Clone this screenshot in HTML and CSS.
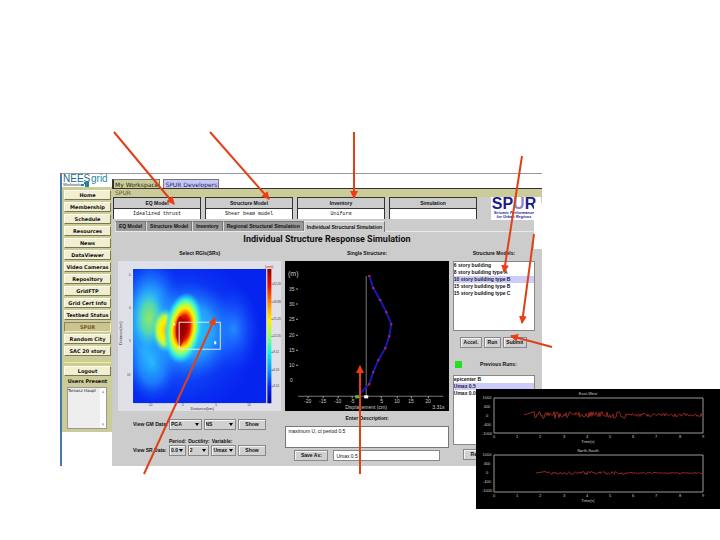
FILE: index.html
```
<!DOCTYPE html>
<html lang="en">
<head>
    <meta charset="utf-8">
    <title>SPUR - Individual Structure Response Simulation</title>
    <link rel="stylesheet" href="styles.css">
</head>
<body>
    <div class="portal">
        <aside class="sidebar">
            <div class="brand">
                <svg viewBox="0 0 50 13" aria-hidden="true">
                    <path d="M22 8h5v2h-5zM23 10h4v3h-4zM19 10h3v2h-3z" fill="#2a7f9a"/>
                    <text x="1" y="8" class="brand-neer">NEES</text>
                    <text x="29" y="8" class="brand-grid">grid</text>
                    <text x="1" y="12" class="brand-tag">Worktools</text>
                </svg>
            </div>
            <nav class="menu">
                <button>Home</button>
                <button>Membership</button>
                <button>Schedule</button>
                <button>Resources</button>
                <button>News</button>
                <button>DataViewer</button>
                <button>Video Cameras</button>
                <button>Repository</button>
                <button>GridFTP</button>
                <button>Grid Cert Info</button>
                <button>Testbed Status</button>
                <button class="current">SPUR</button>
                <button>Random City</button>
                <button>SAC 20 story</button>
                <hr>
                <button>Logout</button>
                <label for="users">Users Present</label>
                <div class="users-box">
                    <select id="users" size="4">
                        <option>Tomasz Haupt</option>
                    </select>
                    <div class="scroll"><span>▴</span><span>▾</span></div>
                </div>
            </nav>
        </aside>

        <main class="workspace">
            <div class="site-tabs">
                <button class="site-tab active">My Workspace</button>
                <button class="site-tab">SPUR Developers</button>
            </div>
            <div class="crumb">SPUR</div>

            <div class="applet">
                <header class="summary">
                    <div class="card"><b>EQ Model</b><span>Idealized thrust</span></div>
                    <div class="card"><b>Structure Model</b><span>Shear beam model</span></div>
                    <div class="card"><b>Inventory</b><span>Uniform</span></div>
                    <div class="card"><b>Simulation</b><span></span></div>
                    <div class="logo">
                        <strong>SP<i>U</i>R</strong>
                        <em>Seismic Performance</em>
                        <em>for Urban Regions</em>
                    </div>
                </header>

                <div class="tabs" role="tablist">
                    <button role="tab">EQ Model</button>
                    <button role="tab">Structure Model</button>
                    <button role="tab">Inventory</button>
                    <button role="tab">Regional Structural Simulation</button>
                    <button role="tab" aria-selected="true">Individual Structural Simulation</button>
                </div>

                <h1>Individual Structure Response Simulation</h1>

                <div class="columns">
                    <section class="column">
                        <h2>Select RGIs(SRs)</h2>
                        <svg class="plot" viewBox="0 0 163 150">
                            <defs>
                                <linearGradient id="jet" x1="0" y1="0" x2="0" y2="1">
                                    <stop offset="0" stop-color="#900000"/>
                                    <stop offset=".13" stop-color="#f01000"/>
                                    <stop offset=".26" stop-color="#ff9000"/>
                                    <stop offset=".38" stop-color="#fff000"/>
                                    <stop offset=".5" stop-color="#90ff70"/>
                                    <stop offset=".62" stop-color="#10f0f0"/>
                                    <stop offset=".76" stop-color="#0890ff"/>
                                    <stop offset=".88" stop-color="#0020ff"/>
                                    <stop offset="1" stop-color="#0000a0"/>
                                </linearGradient>
                                <radialGradient id="peak">
                                    <stop offset="0" stop-color="#900000"/>
                                    <stop offset=".2" stop-color="#a80000"/>
                                    <stop offset=".36" stop-color="#f01800"/>
                                    <stop offset=".46" stop-color="#ff9000"/>
                                    <stop offset=".56" stop-color="#fff000"/>
                                    <stop offset=".68" stop-color="#a0ff60"/>
                                    <stop offset=".8" stop-color="#30f0e0"/>
                                    <stop offset="1" stop-color="#20c8ff" stop-opacity="0"/>
                                </radialGradient>
                                <radialGradient id="lobe">
                                    <stop offset="0" stop-color="#ffc800"/>
                                    <stop offset=".4" stop-color="#fff000"/>
                                    <stop offset=".65" stop-color="#b0f850"/>
                                    <stop offset="1" stop-color="#30e0e0" stop-opacity="0"/>
                                </radialGradient>
                                <radialGradient id="green">
                                    <stop offset="0" stop-color="#90e860"/>
                                    <stop offset=".5" stop-color="#60e0a0" stop-opacity=".8"/>
                                    <stop offset="1" stop-color="#30c8ff" stop-opacity="0"/>
                                </radialGradient>
                                <radialGradient id="cyan">
                                    <stop offset="0" stop-color="#28d8ff"/>
                                    <stop offset=".5" stop-color="#28a8ff" stop-opacity=".85"/>
                                    <stop offset="1" stop-color="#1060ff" stop-opacity="0"/>
                                </radialGradient>
                                <radialGradient id="haze">
                                    <stop offset="0" stop-color="#2890ff"/>
                                    <stop offset="1" stop-color="#1040ff" stop-opacity="0"/>
                                </radialGradient>
                                <clipPath id="field"><path d="M15 8h133v134H15z"/></clipPath>
                            </defs>
                            <g clip-path="url(#field)">
                                <path d="M15 8h133v134H15z" fill="#0524ee"/>
                                <ellipse cx="60" cy="74" rx="84" ry="84" fill="url(#haze)"/>
                                <ellipse cx="115" cy="68" rx="26" ry="44" fill="url(#haze)"/>
                                <ellipse cx="32" cy="62" rx="34" ry="70" fill="url(#cyan)"/>
                                <ellipse cx="34" cy="102" rx="26" ry="40" fill="url(#cyan)" opacity=".6"/>
                                <ellipse cx="72" cy="70" rx="48" ry="50" fill="url(#cyan)"/>
                                <ellipse cx="31" cy="57" rx="16" ry="30" fill="url(#green)"/>
                                <ellipse cx="47" cy="69" rx="13" ry="22" fill="url(#lobe)"/>
                                <ellipse cx="65" cy="67" rx="19" ry="36" fill="url(#peak)" transform="rotate(8 65 67)"/>
                                <ellipse cx="62" cy="70" rx="4" ry="15" fill="#940000" opacity=".6"/>
                            </g>
                            <path d="M61 61h41v27H61z" class="region"/>
                            <path d="M96 80h2v3h-2zM55 62h2v2h-2z" fill="#fff"/>
                            <path d="M149 8h4v134h-4z" fill="url(#jet)"/>
                            <path d="M153 23h2M153 41h2M153 58h2M153 75h2M153 91h2M153 109h2M153 125h2" stroke="#777"/>
                            <g class="map-text">
                                <text x="147" y="7" fill="#c00">[cm/s]</text>
                                <text x="155" y="24">22.20</text>
                                <text x="155" y="42">18.88</text>
                                <text x="155" y="59">15.20</text>
                                <text x="155" y="76">12.05</text>
                                <text x="155" y="92">9.11</text>
                                <text x="155" y="110">6.20</text>
                                <text x="155" y="126">3.10</text>
                                <text x="10" y="15">-5</text>
                                <text x="11" y="48">0</text>
                                <text x="11" y="81">5</text>
                                <text x="9" y="115">10</text>
                                <text x="30" y="145">-10</text>
                                <text x="63" y="145">-5</text>
                                <text x="97" y="145">5</text>
                                <text x="129" y="145">10</text>
                                <text x="84" y="149" class="axis">Distance(km)</text>
                                <text x="4" y="72" class="axis" transform="rotate(-90 4 72)">Distance(km)</text>
                            </g>
                        </svg>
                        <form class="query">
                            <label for="gm">View GM Data:</label>
                            <div class="picks gm">
                                <select id="gm"><option>PGA</option></select>
                                <select aria-label="Direction"><option>NS</option></select>
                            </div>
                            <button type="button">Show</button>
                            <div class="picks sr heads">
                                <label for="period">Period:</label>
                                <label for="ductility">Ductility:</label>
                                <label for="variable">Variable:</label>
                            </div>
                            <label for="period">View SR Data:</label>
                            <div class="picks sr">
                                <select id="period"><option>0.0</option></select>
                                <select id="ductility"><option>2</option></select>
                                <select id="variable"><option>Umax</option></select>
                            </div>
                            <button type="button">Show</button>
                        </form>
                    </section>

                    <section class="column">
                        <h2>Single Structure:</h2>
                        <svg class="plot dark" viewBox="0 0 163 150">
                            <path d="M81 15V135M13 135H158" stroke="#777" fill="none"/>
                            <path d="M11 28h2M11 43h2M11 58h2M11 74h2M11 89h2M11 104h2M23 135v2M38 135v2M53 135v2M67 135v2M96 135v2M112 135v2M126 135v2M143 135v2" stroke="#aaa"/>
                            <path class="drift" d="M84 15L88 27L95 39L101 51L106 63L104 75L100 87L93 99L88 111L84 123L75 132"/>
                            <path class="floors" d="M84 15h0M88 27h0M95 39h0M101 51h0M106 63h0M104 75h0M100 87h0M93 99h0M88 111h0M84 123h0"/>
                            <path d="M70 134h4v3h-4z" fill="#4c3"/>
                            <path d="M79 134h4v3h-4z" fill="#fff"/>
                            <g class="plot-text">
                                <text x="3" y="15" class="unit">(m)</text>
                                <text x="4" y="30">35</text>
                                <text x="4" y="45">30</text>
                                <text x="4" y="60">25</text>
                                <text x="4" y="76">20</text>
                                <text x="4" y="91">15</text>
                                <text x="4" y="106">10</text>
                                <text x="5" y="121">0</text>
                                <text x="19" y="142">-20</text>
                                <text x="34" y="142">-15</text>
                                <text x="49" y="142">-10</text>
                                <text x="65" y="142">-5</text>
                                <text x="95" y="142">5</text>
                                <text x="109" y="142">10</text>
                                <text x="123" y="142">15</text>
                                <text x="140" y="142">20</text>
                                <text x="60" y="148" class="caption">Displacement (cm)</text>
                                <text x="147" y="148">3.31s</text>
                            </g>
                        </svg>
                        <form class="describe">
                            <label for="description">Enter Description:</label>
                            <textarea id="description">maximum U, ct period 0.5</textarea>
                            <div class="save">
                                <button type="button">Save As:</button>
                                <input type="text" value="Umax 0.5" aria-label="Run name">
                            </div>
                        </form>
                    </section>

                    <section class="column models">
                        <h2><label for="models">Structure Models:</label></h2>
                        <select id="models" class="list" size="9">
                            <option>6 story building</option>
                            <option>8 story building type A</option>
                            <option selected>10 story building type B</option>
                            <option>15 story building type B</option>
                            <option>15 story building type C</option>
                        </select>
                        <div class="actions">
                            <button>Accel.</button>
                            <button>Run</button>
                            <button>Submit</button>
                        </div>
                        <div class="runs-head">
                            <span class="lamp"></span>
                            <label for="runs">Previous Runs:</label>
                        </div>
                        <select id="runs" class="list" size="9">
                            <option>epicenter B</option>
                            <option selected>Umax 0.5</option>
                            <option>Umax 0.0</option>
                        </select>
                        <button class="replay">Replay</button>
                    </section>
                </div>
            </div>
        </main>
        <div class="notch"></div>
    </div>

    <div class="records">
        <svg viewBox="0 0 244 120">
            <g class="frames">
                <path d="M18 9H227V44H18z"/>
                <path d="M18 66H227V103H18z"/>
            </g>
            <path id="eastWest" class="trace"/>
            <path id="northSouth" class="trace"/>
            <g class="record-text">
                <text x="112" y="6">East-West</text>
                <text x="112" y="54">Time(s)</text>
                <text x="112" y="63">North-South</text>
                <text x="112" y="113">Time(s)</text>
            </g>
            <g id="ticks" class="record-text"></g>
        </svg>
    </div>

    <svg class="arrows" viewBox="0 0 720 540" aria-hidden="true">
        <defs>
            <marker id="head" viewBox="0 0 8 8" refX="7" refY="4" markerWidth="8" markerHeight="8" markerUnits="userSpaceOnUse" orient="auto">
                <path d="M0 0L8 4L0 8z" fill="#ee3d12"/>
            </marker>
        </defs>
        <path d="M114 132L174 204"/>
        <path d="M210 132L269 199"/>
        <path d="M354 132V198"/>
        <path d="M522 156L504 272"/>
        <path d="M534 234L522 323"/>
        <path d="M552 347L511 336"/>
        <path d="M144 474L215 318"/>
        <path d="M360 474V366"/>
    </svg>

    <script src="records.js"></script>
</body>
</html>
```
FILE: styles.css
```
* {
    box-sizing: border-box;
}

body {
    margin: 0;
    min-height: 540px;
    position: relative;
    background: white;
    color: #111;
    font-family: "Liberation Sans", Arial, sans-serif;
    font-size: 5px;
    line-height: 7px;
}

button, select, input, textarea {
    margin: 0;
    padding: 0;
    border-radius: 0;
    color: #111;
    font-family: inherit;
    font-size: 5px;
    line-height: 7px;
}

h1, h2 {
    margin: 0;
    text-align: center;
}

/* portal frame */
.portal {
    position: relative;
    display: flex;
    margin: 173px 178px 0 60px;
    border-top: 1px solid #999;
    border-left: 2px solid #4a78a8;
}

.sidebar {
    width: 50px;
    flex: none;
}

.brand {
    height: 13px;
}

.brand svg {
    display: block;
    width: 100%;
    overflow: visible;
}

.brand-neer {
    font-size: 10px;
    fill: #1d6a8a;
}

.brand-grid {
    font-size: 10px;
    fill: #2a8aa0;
}

.brand-tag {
    font-size: 4px;
    fill: #235;
}

.menu {
    display: flex;
    flex-direction: column;
    gap: 2px;
    padding: 3px 1px 3px 2px;
    background: #cccc99;
    font-family: "DejaVu Sans", Verdana, sans-serif;
}

.menu button {
    height: 10px;
    padding: 0;
    border: 1px solid;
    border-color: #fffff0 #77775a #77775a #fffff0;
    background: #f2eed2;
    font-weight: bold;
    font-size: 5px;
    line-height: 7px;
    white-space: nowrap;
}

.menu button.current {
    background: #cbc48e;
    border-color: #8a8660 #eeeecc #eeeecc #8a8660;
    color: #7a5a20;
}

.menu hr {
    width: 100%;
    margin: 4px 0 1px;
    border: 0;
    border-top: 1px solid #eeee99;
}

.menu label {
    font-weight: bold;
    text-align: center;
    white-space: nowrap;
}

.users-box {
    display: flex;
    height: 42px;
    margin: 0 4px 0 3px;
    border: 1px solid #999;
    background: #eee;
}

.users-box select {
    flex: 1;
    min-width: 0;
    border: 0;
    background: #eee;
    font-size: 4px;
    overflow: hidden;
}

.users-box option {
    padding: 0;
}

.scroll {
    display: flex;
    flex-direction: column;
    justify-content: space-between;
    width: 6px;
    background: white;
    color: #aaa;
    text-align: center;
}

.workspace {
    flex: 1;
    min-width: 0;
}

.site-tabs {
    display: flex;
    gap: 3px;
    height: 15px;
    padding-top: 5px;
    align-items: flex-end;
    border-bottom: 1px solid #333;
}

.site-tab {
    height: 9px;
    padding: 0 1px;
    border: 1px solid #777;
    border-bottom: 0;
    background: #c8c8f8;
    color: #225;
    font-family: "DejaVu Sans", Verdana, sans-serif;
    font-size: 6px;
}

.site-tab.active {
    border-left: 2px solid #333;
    background: #cccc99;
    color: #221;
}

.crumb {
    height: 8px;
    padding-left: 3px;
    background: #cccc99;
    color: #553;
    font-family: "DejaVu Sans", Verdana, sans-serif;
    font-size: 6px;
}

/* simulation applet */
.applet {
    padding-bottom: 5px;
    background: #cccccc;
}

.summary {
    display: grid;
    grid-template-columns: repeat(4, 88fr) 60fr;
    column-gap: 4px;
    height: 23px;
    padding: 0 1px;
    align-items: start;
}

.card {
    display: grid;
    grid-template-rows: 11px 10px;
    border: 1px solid #333;
    border-bottom: 0;
    text-align: center;
}

.card b {
    line-height: 10px;
    border-bottom: 1px solid #333;
}

.card span {
    background: white;
    font-family: "Liberation Mono", monospace;
    line-height: 10px;
}

.logo {
    margin-left: 10px;
    padding-right: 4px;
    height: 23px;
    background: white;
    color: #1c1c8c;
    font-size: 4px;
    line-height: 4px;
    text-align: center;
    white-space: nowrap;
}

.logo strong {
    display: block;
    font-size: 16px;
    line-height: 14px;
}

.logo i {
    color: #8888cc;
    font-style: normal;
}

.logo em {
    display: block;
    font-weight: bold;
}

.tabs {
    display: flex;
    height: 11px;
    margin: 1px 8px 0 3px;
    border-bottom: 1px solid #e8e8e8;
}

.tabs button {
    height: 10px;
    padding: 0 3px;
    border: 1px solid #777;
    border-left-color: #ddd;
    border-bottom: 0;
    background: #999;
    font-weight: bold;
    white-space: nowrap;
}

.tabs button[aria-selected="true"] {
    height: 11px;
    padding: 0 2px;
    background: #ccc;
    border-top-color: #eee;
}

.applet h1 {
    padding-top: 2px;
    font-family: Roboto, "Liberation Sans", sans-serif;
    font-size: 9px;
    line-height: 11px;
}

.applet h2 {
    margin: 5px 0 4px;
    font-size: 5px;
    line-height: 7px;
    white-space: nowrap;
}

.columns {
    display: grid;
    grid-template-columns: 163fr 163fr 82fr;
    gap: 4px;
    padding: 0 7px 0 6px;
}

.column {
    display: flex;
    flex-direction: column;
    min-width: 0;
}

.plot {
    display: block;
    width: 100%;
    background: #e0e0e8;
}

.plot.dark {
    background: black;
}

.region {
    fill: none;
    stroke: #e0e8e8;
}

.map-text {
    font-size: 3px;
    fill: #333;
}

.axis {
    font-size: 4px;
    text-anchor: middle;
}

.drift {
    fill: none;
    stroke: #1818b8;
    stroke-width: 2;
}

.floors {
    stroke: #d02040;
    stroke-width: 2;
    stroke-linecap: square;
}

.plot-text {
    font-size: 5px;
    fill: #ccc;
}

.plot-text .unit {
    font-size: 7px;
}

.plot-text .caption {
    font-size: 5px;
}

/* forms under the plots */
.applet button:not([role]) {
    height: 11px;
    border: 1px solid #888;
    background: #d0d0d0;
    box-shadow: inset 1px 1px #f4f4f4;
    font-weight: bold;
}

.query {
    display: grid;
    grid-template-columns: 34px 67px 28px;
    column-gap: 2px;
    align-items: center;
    padding: 8px 0 0 15px;
    font-weight: bold;
    white-space: nowrap;
}

.picks {
    display: grid;
    column-gap: 2px;
}

.picks.gm {
    grid-template-columns: 1fr 1fr;
}

.picks.sr {
    grid-template-columns: 17fr 22fr 25fr;
}

.picks.heads {
    grid-column: 2 / 4;
    width: 67px;
    padding-top: 8px;
}

.picks select {
    appearance: none;
    min-width: 0;
    height: 11px;
    padding: 0 1px;
    border: 1px solid #888;
    background: #d0d0d0 url("data:image/svg+xml,%3Csvg xmlns='http://www.w3.org/2000/svg' width='4' height='3'%3E%3Cpath d='M0 0h4L2 3z'/%3E%3C/svg%3E") no-repeat right 2px center;
    box-shadow: inset 1px 1px #f4f4f4;
    font-weight: bold;
}

.describe {
    display: flex;
    flex-direction: column;
    padding-top: 4px;
}

.describe label {
    text-align: center;
    font-weight: bold;
}

.describe textarea {
    height: 22px;
    margin: 4px 0 2px;
    padding: 1px 2px;
    border: 1px solid #777;
    background: white;
    resize: none;
}

.save {
    display: flex;
    gap: 5px;
    padding: 0 9px;
}

.save button {
    width: 34px;
}

.save input {
    flex: 1;
    min-width: 0;
    height: 11px;
    padding: 0 2px;
    border: 1px solid #888;
}

.list {
    width: 100%;
    height: 70px;
    border: 1px solid #888;
    background: white;
    overflow: hidden;
}

.list option {
    min-height: 7px;
    padding: 0;
    font-weight: bold;
    line-height: 7px;
}

.list option:checked {
    background: #ccccf8 linear-gradient(#ccccf8, #ccccf8);
    color: #223;
}

.actions {
    display: grid;
    grid-template-columns: 23fr 17fr 25fr;
    gap: 2px;
    padding: 6px 8px 0 7px;
}

.runs-head {
    display: flex;
    align-items: center;
    padding: 13px 0 7px 2px;
    font-weight: bold;
}

.runs-head label {
    flex: 1;
    text-align: center;
}

.lamp {
    width: 7px;
    height: 7px;
    background: #22e022;
}

.replay {
    width: 32px;
    margin: 4px 0 0 10px;
}

/* page area cut out beside the logo */
.notch {
    position: absolute;
    top: 29px;
    right: 0;
    width: 8px;
    height: 46px;
    background: white;
}

/* acceleration records */
.records {
    position: absolute;
    top: 389px;
    right: 0;
    width: 244px;
    background: black;
}

.records svg {
    display: block;
    width: 100%;
}

.frames {
    fill: none;
    stroke: #999;
}

.trace {
    fill: none;
    stroke: #902820;
    stroke-width: 1;
}

.record-text {
    font-size: 4px;
    fill: #ccc;
    text-anchor: middle;
}

.arrows {
    position: absolute;
    top: 0;
    left: 0;
    width: 100%;
    pointer-events: none;
    fill: none;
    stroke: #e04018;
    stroke-width: 2;
}

.arrows path {
    marker-end: url(#head);
}

.arrows marker path {
    marker-end: none;
    stroke: none;
}
```
FILE: records.js
```
// Small repeatable noise source so the traces look the same on each load
function noise(seed) {
    let n = seed;
    return function () {
        n = (n * 16807) % 2147483647;
        return n / 2147483647 - 0.5;
    };
}

function drawTrace(id, start, middle, size, seed) {
    const next = noise(seed);
    let d = `M${start} ${middle}`;
    for (let x = start + 10; x <= 227; x += 1) {
        const fade = x < 150 ? 1 : 0.5;
        d += `L${x} ${(middle + next() * size * fade).toFixed(1)}`;
    }
    document.getElementById(id).setAttribute('d', d);
}

function addLabel(x, y, text) {
    const label = document.createElementNS('http://www.w3.org/2000/svg', 'text');
    label.setAttribute('x', x);
    label.setAttribute('y', y);
    label.textContent = text;
    document.getElementById('ticks').appendChild(label);
}

drawTrace('eastWest', 48, 26, 7, 4211);
drawTrace('northSouth', 60, 84, 3, 977);

['1000', '400', '0', '-400', '-1000'].forEach((text, i) => {
    addLabel(11, 10 + i * 9, text);
    addLabel(11, 67 + i * 9, text);
});

for (let i = 0; i < 10; i++) {
    const x = 18 + Math.round(i * 23.2);
    addLabel(x, 49, i);
    addLabel(x, 108, i);
}
```
